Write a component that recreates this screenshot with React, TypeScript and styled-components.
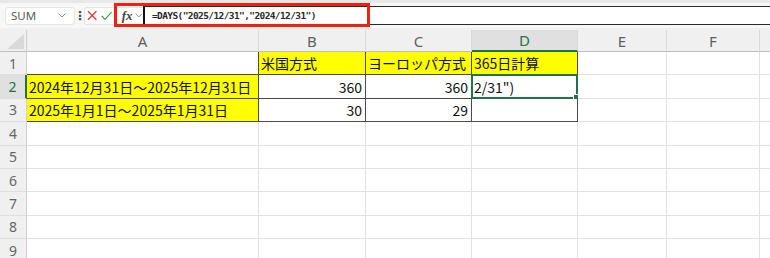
import styled, { createGlobalStyle } from "styled-components";

const GlobalStyle = createGlobalStyle`
  html, body {
    margin: 0;
    padding: 0;
    background: #ffffff;
    overflow: hidden;
  }
  body {
    font-family: "Noto Sans CJK JP", "Noto Sans", sans-serif;
  }
`;

type Line = "dark" | "grid";

interface CellData {
  text?: string;
  fill?: boolean;
  align?: "left" | "right";
  right?: Line;
  bottom?: Line;
  selected?: boolean;
}

// the last column (G) is cut by the window edge, so its letter is not shown
const columns = ["A", "B", "C", "D", "E", "F", ""];
const selectedCol = "D";
const selectedRow = 2;

const dark: CellData = { right: "dark", bottom: "dark" };

const rows: CellData[][] = [
  [
    { ...dark },
    { ...dark, text: "米国方式", fill: true },
    { ...dark, text: "ヨーロッパ方式", fill: true },
    { ...dark, text: "365日計算", fill: true },
    {},
    {},
    {},
  ],
  [
    { ...dark, text: "2024年12月31日～2025年12月31日", fill: true },
    { ...dark, text: "360", align: "right" },
    { ...dark, text: "360", align: "right" },
    { ...dark, text: "2/31\")", selected: true },
    {},
    {},
    {},
  ],
  [
    { ...dark, text: "2025年1月1日～2025年1月31日", fill: true },
    { ...dark, text: "30", align: "right" },
    { ...dark, text: "29", align: "right" },
    { ...dark },
    {},
    {},
    {},
  ],
];

while (rows.length < 9) rows.push([{}, {}, {}, {}, {}, {}, {}]);

function App() {
  return (
    <Page>
      <GlobalStyle />
      <TopStrip />
      <FormulaBar>
        <NameBox>
          <span>SUM</span>
          <Chevron />
        </NameBox>
        <Dots>⋮</Dots>
        <EditBox>
          <svg width="11" height="11" viewBox="0 0 11 11">
            <path d="M1 1 L10 10 M10 1 L1 10" stroke="#e0322b" strokeWidth="1.2" fill="none" />
          </svg>
          <svg width="12" height="10" viewBox="0 0 12 10">
            <path d="M0.8 5 L4.2 8.6 L11.2 0.8" stroke="#3f9a4a" strokeWidth="1.2" fill="none" />
          </svg>
          <Fx>fx</Fx>
          <Chevron />
        </EditBox>
        <FormulaInput>=DAYS("2025/12/31","2024/12/31")</FormulaInput>
        <Callout />
      </FormulaBar>
      <Spacer />
      <Sheet>
        <Corner>
          <svg width="17" height="15" viewBox="0 0 17 15">
            <path d="M17 0 L17 15 L0 15 Z" fill="#d9d9d9" />
          </svg>
        </Corner>
        {columns.map((c, i) => (
          <ColHeader key={i} $active={c === selectedCol}>
            {c}
          </ColHeader>
        ))}
        {rows.map((row, r) => (
          <Row key={r} row={row} index={r + 1} />
        ))}
      </Sheet>
    </Page>
  );
}

function Row({ row, index }: { row: CellData[]; index: number }) {
  return (
    <>
      <RowHeader $active={index === selectedRow}>{index}</RowHeader>
      {row.map((cell, i) => (
        <Cell
          key={i}
          $fill={cell.fill}
          $align={cell.align}
          $right={cell.right ?? "grid"}
          $bottom={cell.bottom ?? "grid"}
        >
          {cell.text}
          {cell.selected && (
            <Selection>
              <Handle />
            </Selection>
          )}
        </Cell>
      ))}
    </>
  );
}

function Chevron() {
  return (
    <svg width="8" height="5" viewBox="0 0 8 5">
      <path d="M0.5 0.5 L4 4 L7.5 0.5" stroke="#8a8a8a" strokeWidth="1" fill="none" />
    </svg>
  );
}

const Page = styled.div`
  width: 770px;
  height: 258px;
  overflow: hidden;
  background: #f7f7f7;
`;

const TopStrip = styled.div`
  height: 3px;
  background: #e8e8e8;
`;

const FormulaBar = styled.div`
  position: relative;
  height: 25px;
  display: flex;
  align-items: center;
  padding-left: 5px;
  background: #f7f7f7;
`;

const NameBox = styled.div`
  box-sizing: border-box;
  width: 70px;
  height: 18px;
  display: flex;
  align-items: center;
  justify-content: space-between;
  padding: 0 8px 0 5px;
  background: #ffffff;
  border: 1px solid #e4e4e4;
  border-radius: 3px;
  font-family: "Noto Sans", "Liberation Sans", sans-serif;
  font-size: 11.5px;
  color: #5a5a5a;
`;

const Dots = styled.div`
  width: 9px;
  margin-left: -1px;
  text-align: center;
  font-family: "DejaVu Sans", sans-serif;
  font-size: 12px;
  font-weight: bold;
  color: #444;
`;

const EditBox = styled.div`
  box-sizing: border-box;
  width: 59px;
  margin-left: 1px;
  height: 18px;
  display: flex;
  align-items: center;
  gap: 4px;
  padding-left: 2px;
  background: #ffffff;
  border: 1px solid #e4e4e4;
  border-right: none;
  border-radius: 3px 0 0 3px;

  svg:nth-child(2) {
    margin-right: 5px;
  }
`;

const Fx = styled.span`
  font-family: "Liberation Serif", serif;
  font-style: italic;
  font-weight: bold;
  font-size: 13px;
  color: #444;
  margin-right: -1px;
`;

const FormulaInput = styled.div`
  box-sizing: border-box;
  flex: 1;
  height: 19px;
  display: flex;
  align-items: center;
  padding-left: 7px;
  background: #ffffff;
  border-top: 1px solid #2a2a2a;
  border-bottom: 1px solid #2a2a2a;
  border-left: 2px solid #111;
  font-family: "DejaVu Sans Mono", monospace;
  font-weight: bold;
  font-size: 9.5px;
  letter-spacing: -0.6px;
  color: #2a2a2a;
`;

const Callout = styled.div`
  position: absolute;
  left: 114px;
  top: 0;
  width: 256px;
  height: 24px;
  box-sizing: border-box;
  border: 3px solid #f2200f;
  pointer-events: none;
`;

const Spacer = styled.div`
  height: 2px;
  background: #f0f0f0;
`;

const Sheet = styled.div`
  display: grid;
  grid-template-columns: 27px 232px 107px 106px 106px 89px 93px 89px;
  grid-template-rows: 22px repeat(9, 23.4px);
  background: #ffffff;
`;

const headerBase = `
  box-sizing: border-box;
  display: flex;
  align-items: center;
  justify-content: center;
  font-family: "Noto Sans", "Open Sans", sans-serif;
  color: #616161;
`;

const Corner = styled.div`
  ${headerBase}
  justify-content: flex-end;
  align-items: flex-end;
  padding: 0 2px 2px 0;
  background: #f0f0f0;
  border-right: 1px solid #cfcfcf;
  border-bottom: 1px solid #bfbfbf;
`;

const ColHeader = styled.div<{ $active?: boolean }>`
  ${headerBase}
  font-size: 15px;
  background: ${(p) => (p.$active ? "#e0e0e0" : "#f0f0f0")};
  color: ${(p) => (p.$active ? "#217346" : "#5f5f5f")};
  border-right: 1px solid #dadada;
  border-bottom: ${(p) => (p.$active ? "2px solid #217346" : "1px solid #bfbfbf")};
`;

const RowHeader = styled.div<{ $active?: boolean }>`
  ${headerBase}
  font-size: 14px;
  background: ${(p) => (p.$active ? "#e0e0e0" : "#f0f0f0")};
  color: ${(p) => (p.$active ? "#217346" : "#666")};
  border-right: ${(p) => (p.$active ? "2px solid #217346" : "1px solid #cfcfcf")};
  border-bottom: 1px solid #dedede;
`;

const lineColor = (l: Line) => (l === "dark" ? "#4a4a4a" : "#e2e2e2");

const Cell = styled.div<{
  $fill?: boolean;
  $align?: "left" | "right";
  $right: Line;
  $bottom: Line;
}>`
  position: relative;
  box-sizing: border-box;
  display: flex;
  align-items: center;
  justify-content: ${(p) => (p.$align === "right" ? "flex-end" : "flex-start")};
  padding: 0 3px 0 2px;
  white-space: nowrap;
  font-size: 14px;
  color: #111;
  background: ${(p) => (p.$fill ? "#ffff00" : "#ffffff")};
  border-right: 1px solid ${(p) => lineColor(p.$right)};
  border-bottom: 1px solid ${(p) => lineColor(p.$bottom)};
`;

const Selection = styled.div`
  position: absolute;
  top: -1px;
  left: -1px;
  right: -1px;
  bottom: -1px;
  border: 2px solid #217346;
  pointer-events: none;
`;

const Handle = styled.div`
  position: absolute;
  right: -4px;
  bottom: -4px;
  width: 5px;
  height: 5px;
  background: #217346;
  border: 1px solid #ffffff;
`;

export default App;
